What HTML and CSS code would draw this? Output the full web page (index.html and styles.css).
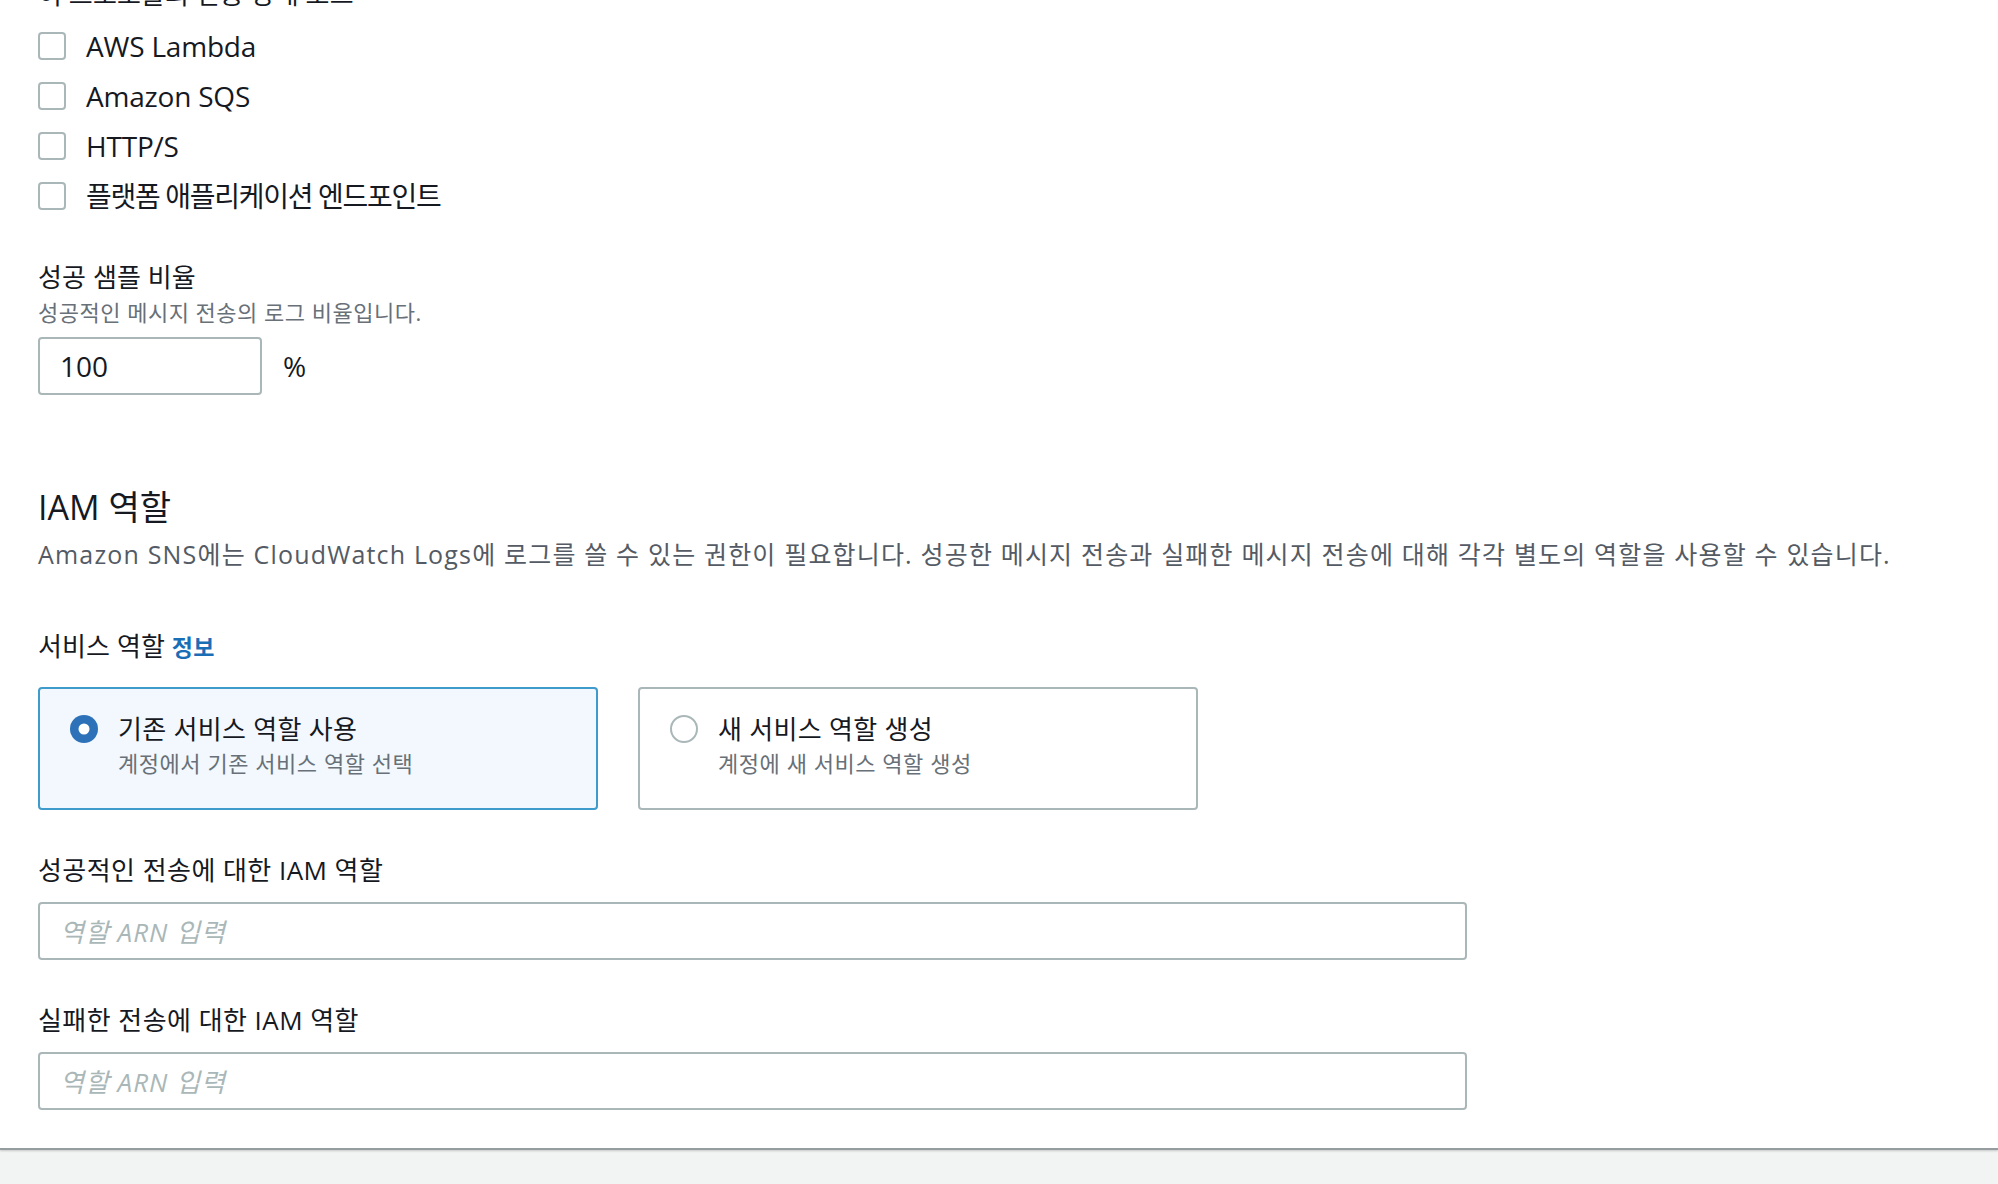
FILE: index.html
```html
<!DOCTYPE html>
<html lang="ko">
<head>
<meta charset="utf-8">
<title>IAM 역할</title>
<link rel="stylesheet" href="styles.css">
</head>
<body>
<main class="panel">
  <div class="field-label top-cut">이 프로토콜의 전송 상태 로그</div>
  <ul class="checks">
    <li class="check-row"><span class="checkbox"></span><span class="check-text">AWS Lambda</span></li>
    <li class="check-row"><span class="checkbox"></span><span class="check-text">Amazon SQS</span></li>
    <li class="check-row"><span class="checkbox"></span><span class="check-text">HTTP/S</span></li>
    <li class="check-row"><span class="checkbox"></span><span class="check-text ko">플랫폼 애플리케이션 엔드포인트</span></li>
  </ul>

  <div class="field-label sample-label">성공 샘플 비율</div>
  <div class="field-desc">성공적인 메시지 전송의 로그 비율입니다.</div>
  <div class="rate-row">
    <div class="input small-input"><span class="value">100</span></div>
    <span class="unit">%</span>
  </div>

  <h2 class="section-title">IAM 역할</h2>
  <p class="section-desc">Amazon SNS에는 CloudWatch Logs에 로그를 쓸 수 있는 권한이 필요합니다. 성공한 메시지 전송과 실패한 메시지 전송에 대해 각각 별도의 역할을 사용할 수 있습니다.</p>

  <div class="field-label role-label">서비스 역할 <span class="info">정보</span></div>
  <div class="tiles">
    <div class="tile selected">
      <span class="radio-wrap">
        <svg class="radio" width="28" height="28" viewBox="0 0 28 28"><circle cx="14" cy="14" r="14" fill="#2d72b8"/><circle cx="14" cy="14" r="5.5" fill="#ffffff"/></svg>
      </span>
      <div class="tile-text">
        <div class="tile-title">기존 서비스 역할 사용</div>
        <div class="tile-desc">계정에서 기존 서비스 역할 선택</div>
      </div>
    </div>
    <div class="tile">
      <span class="radio-wrap">
        <svg class="radio" width="28" height="28" viewBox="0 0 28 28"><circle cx="14" cy="14" r="13" fill="#ffffff" stroke="#aab7b8" stroke-width="2"/></svg>
      </span>
      <div class="tile-text">
        <div class="tile-title">새 서비스 역할 생성</div>
        <div class="tile-desc">계정에 새 서비스 역할 생성</div>
      </div>
    </div>
  </div>

  <div class="field-label arn-label">성공적인 전송에 대한 IAM 역할</div>
  <div class="input wide-input"><span class="placeholder">역할 ARN 입력</span></div>

  <div class="field-label arn-label">실패한 전송에 대한 IAM 역할</div>
  <div class="input wide-input"><span class="placeholder">역할 ARN 입력</span></div>
</main>
</body>
</html>
```

FILE: styles.css
```css
html, body {
  margin: 0;
  padding: 0;
}

body {
  background: #f2f3f3;
  font-family: "Open Sans", "Noto Sans CJK KR", sans-serif;
  color: #16191f;
  height: 1184px;
  overflow: hidden;
}

.panel {
  display: flow-root;
  background: #ffffff;
  height: 1150px;
  box-sizing: border-box;
  padding: 0 0 0 38px;
  border-bottom: 2px solid #959d9e;
  box-shadow: 0 1px 2px rgba(0, 0, 0, 0.18);
}

.field-label {
  font-size: 26px;
  letter-spacing: 0.1px;
  line-height: 36px;
  color: #16191f;
}

.top-cut {
  margin-top: -24px;
}

.checks {
  list-style: none;
  margin: 9px 0 0 0;
  padding: 0;
}

.check-row {
  display: flex;
  align-items: center;
  height: 50px;
}

.checkbox {
  width: 28px;
  height: 28px;
  box-sizing: border-box;
  border: 2px solid #aab7b8;
  border-radius: 4px;
  background: #ffffff;
  flex: none;
}

.check-text {
  margin-left: 20px;
  font-size: 28px;
  letter-spacing: -0.2px;
  line-height: 40px;
}

.check-text.ko {
  letter-spacing: -1.3px;
}

.sample-label {
  margin-top: 38px;
}

.field-desc {
  font-size: 22px;
  letter-spacing: 0.5px;
  line-height: 34px;
  color: #687078;
}

.rate-row {
  display: flex;
  align-items: center;
  gap: 21px;
  margin-top: 8px;
}

.input {
  box-sizing: border-box;
  height: 58px;
  border: 2px solid #aab7b8;
  border-radius: 4px;
  background: #ffffff;
  display: flex;
  align-items: center;
  padding: 0 20px;
}

.small-input {
  width: 224px;
}

.value {
  font-size: 28px;
  color: #16191f;
}

.unit {
  font-size: 28px;
  color: #16191f;
}

.section-title {
  margin: 90px 0 0 0;
  font-size: 34px;
  font-weight: 400;
  line-height: 44px;
  color: #16191f;
}

.section-desc {
  margin: 0;
  font-size: 25px;
  letter-spacing: 1.18px;
  line-height: 50px;
  color: #545b64;
  white-space: nowrap;
}

.role-label {
  margin-top: 49px;
}

.info {
  font-size: 23px;
  font-weight: 700;
  letter-spacing: 0.3px;
  color: #1a6eb5;
}

.tiles {
  display: flex;
  gap: 40px;
  margin-top: 22px;
}

.tile {
  box-sizing: border-box;
  width: 560px;
  height: 123px;
  border: 2px solid #aab7b8;
  border-radius: 4px;
  background: #ffffff;
  display: flex;
  gap: 20px;
  padding: 22px 30px 0 30px;
}

.tile.selected {
  border-color: #3f9bcb;
  background: #f2f8fd;
}

.radio-wrap {
  height: 36px;
  display: flex;
  align-items: center;
  flex: none;
}

.radio {
  display: block;
}

.tile-title {
  font-size: 26px;
  letter-spacing: 0.3px;
  line-height: 36px;
  color: #16191f;
}

.tile-desc {
  font-size: 22px;
  letter-spacing: 0.55px;
  line-height: 32px;
  color: #687078;
}

.arn-label {
  margin-top: 42px;
  letter-spacing: 0.45px;
}

.wide-input {
  width: 1429px;
  margin-top: 14px;
}

.placeholder {
  font-size: 26px;
  font-style: italic;
  letter-spacing: 1px;
  color: #aab7b8;
}
```
